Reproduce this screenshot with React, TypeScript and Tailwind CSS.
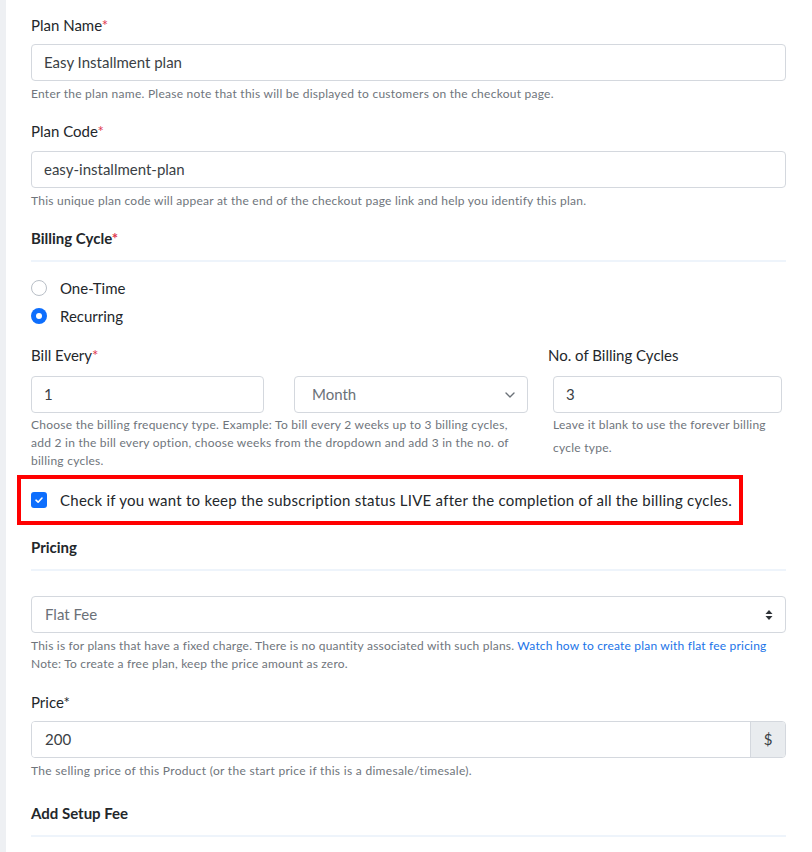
import { ChevronDown } from "lucide-react";

const font = { fontFamily: "Lato, 'Open Sans', sans-serif" };

function Req() {
  return <span className="text-[#e0394f]">*</span>;
}

function TextInput({ value, className = "" }: { value: string; className?: string }) {
  return (
    <div
      className={`flex h-[37px] items-center rounded-[4px] border border-[#d4d8de] bg-white px-[12px] text-[15px] text-[#3b3f45] ${className}`}
    >
      {value}
    </div>
  );
}

function Divider() {
  return <div className="h-[2px] bg-[#eef4fb]" />;
}

export default function App() {
  return (
    <div className="min-h-[852px] w-[812px] border-l-[6px] border-[#eef0f3] bg-white" style={font}>
      <div className="pl-[25px] pr-[26px] pt-[15px]">
        {/* Plan name */}
        <label className="block text-[15px] leading-[20px] text-[#23272b]">
          Plan Name<Req />
        </label>
        <TextInput value="Easy Installment plan" className="mt-[9px]" />
        <p className="mt-[4px] text-[12px] leading-[18px] tracking-[0.25px] text-[#6f757c]">
          Enter the plan name. Please note that this will be displayed to customers on the checkout page.
        </p>

        {/* Plan code */}
        <label className="mt-[18px] block text-[15px] leading-[20px] text-[#23272b]">
          Plan Code<Req />
        </label>
        <TextInput value="easy-installment-plan" className="mt-[10px]" />
        <p className="mt-[4px] text-[12px] leading-[18px] tracking-[0.25px] text-[#6f757c]">
          This unique plan code will appear at the end of the checkout page link and help you identify this plan.
        </p>

        {/* Billing cycle */}
        <h4 className="mt-[18px] pb-[12px] text-[15px] font-bold leading-[20px] text-[#23272b]">
          Billing Cycle<Req />
        </h4>
        <Divider />
        <div className="mt-[12px]">
          <div className="flex h-[28px] items-center gap-[13px] text-[15px] text-[#23272b]">
            <span className="h-[16px] w-[16px] rounded-full border border-[#b9bfc7] bg-white" />
            One-Time
          </div>
          <div className="flex h-[28px] items-center gap-[13px] text-[15px] text-[#23272b]">
            <span className="flex h-[16px] w-[16px] items-center justify-center rounded-full bg-[#0d6efd]">
              <span className="h-[6px] w-[6px] rounded-full bg-white" />
            </span>
            Recurring
          </div>
        </div>

        <div className="mt-[15px] flex">
          <div className="w-[497px]">
            <label className="block text-[15px] leading-[20px] text-[#23272b]">
              Bill Every<Req />
            </label>
            <div className="mt-[11px] flex gap-[30px]">
              <TextInput value="1" className="w-[233px]" />
              <div className="flex h-[37px] w-[234px] items-center justify-between rounded-[4px] border border-[#d4d8de] bg-white pl-[17px] pr-[9px] text-[15px] text-[#6b7178]">
                Month
                <ChevronDown size={16} strokeWidth={2} className="text-[#6b7178]" />
              </div>
            </div>
            <p className="mt-[3px] w-[490px] text-[12px] leading-[18px] tracking-[0.25px] text-[#6f757c]">
              Choose the billing frequency type. Example: To bill every 2 weeks up to 3 billing cycles, add 2 in the bill every option, choose weeks from the dropdown and add 3 in the no. of billing cycles.
            </p>
          </div>
          <div className="ml-[25px] w-[229px]">
            <label className="-ml-[5px] block text-[15px] leading-[20px] text-[#23272b]">No. of Billing Cycles</label>
            <TextInput value="3" className="mt-[11px]" />
            <p className="mt-0 text-[12px] leading-[23px] tracking-[0.25px] text-[#6f757c]">
              Leave it blank to use the forever billing cycle type.
            </p>
          </div>
        </div>

        {/* Highlighted checkbox */}
        <div className="-ml-[14px] mt-[5px] flex h-[50px] w-[726px] items-center border-[4px] border-[#ff0000] pl-[10px]">
          <span className="flex h-[16px] w-[16px] items-center justify-center rounded-[3px] bg-[#0d6efd]">
            <svg width="10" height="10" viewBox="0 0 10 10" fill="none">
              <path d="M2 5.2 L4.1 7.2 L8 3" stroke="white" strokeWidth="1.6" strokeLinecap="round" strokeLinejoin="round" />
            </svg>
          </span>
          <span className="ml-[13px] text-[15px] tracking-[0.25px] text-[#23272b]">
            Check if you want to keep the subscription status LIVE after the completion of all the billing cycles.
          </span>
        </div>

        {/* Pricing */}
        <h4 className="mt-[12px] pb-[12px] text-[15px] font-bold leading-[20px] text-[#23272b]">
          Pricing
        </h4>
        <Divider />
        <div className="mt-[25px] flex h-[37px] items-center justify-between rounded-[4px] border border-[#d4d8de] bg-white pl-[13px] pr-[12px] text-[15px] text-[#6b7178]">
          Flat Fee
          <svg width="8" height="12" viewBox="0 0 8 12">
            <path d="M4 1 L7.5 5 H0.5 Z" fill="#2f3338" />
            <path d="M4 11 L7.5 7 H0.5 Z" fill="#2f3338" />
          </svg>
        </div>
        <p className="mt-[4px] text-[12px] leading-[18px] tracking-[0.2px] text-[#6f757c]">
          This is for plans that have a fixed charge. There is no quantity associated with such plans.{" "}
          <a className="text-[#1a73e8]">Watch how to create plan with flat fee pricing</a>
          <br />
          Note: To create a free plan, keep the price amount as zero.
        </p>

        {/* Price */}
        <label className="mt-[19px] block text-[15px] leading-[20px] text-[#23272b]">Price*</label>
        <div className="mt-[9px] flex h-[37px] overflow-hidden rounded-[4px] border border-[#d4d8de]">
          <div className="flex flex-1 items-center bg-white pl-[13px] text-[15px] text-[#3b3f45]">200</div>
          <div className="flex w-[35px] items-center justify-center border-l border-[#d4d8de] bg-[#e9ecef] text-[15px] text-[#3b3f45]">
            $
          </div>
        </div>
        <p className="mt-[4px] text-[12px] leading-[18px] tracking-[0.3px] text-[#6f757c]">
          The selling price of this Product (or the start price if this is a dimesale/timesale).
        </p>

        {/* Setup fee */}
        <h4 className="mt-[23px] pb-[12px] text-[15px] font-bold leading-[20px] text-[#23272b]">
          Add Setup Fee
        </h4>
        <Divider />
      </div>
    </div>
  );
}
